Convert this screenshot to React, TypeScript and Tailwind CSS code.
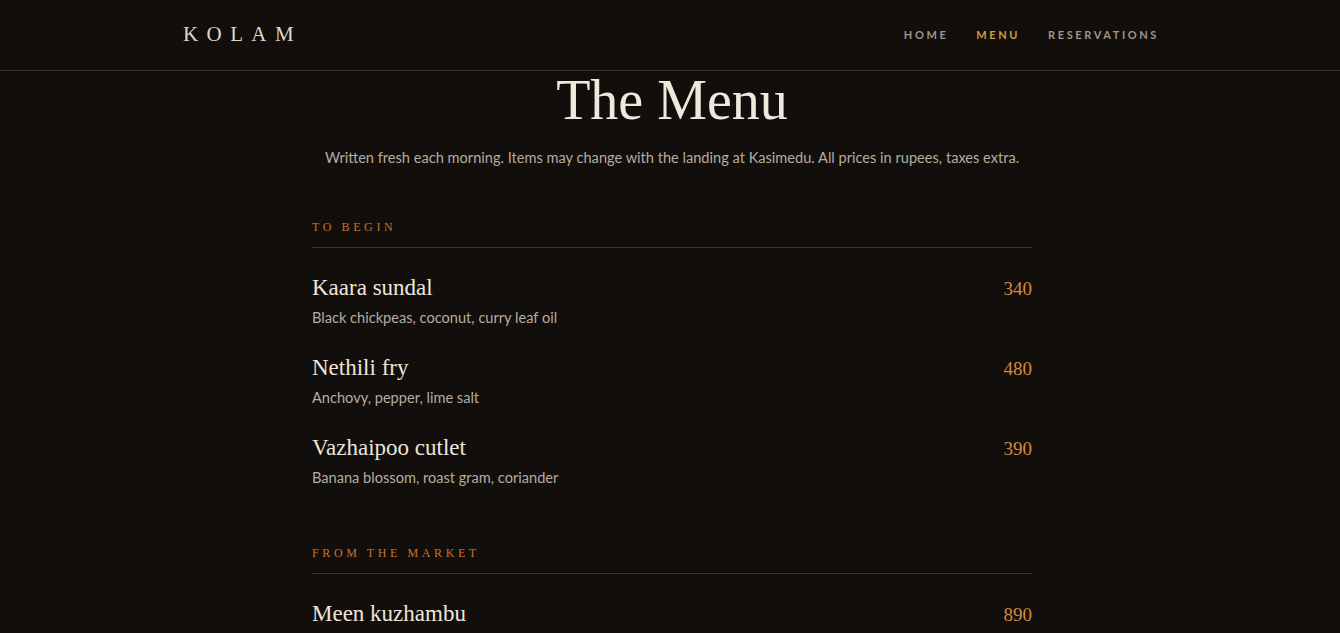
import React from "react";

const serif = { fontFamily: '"Liberation Serif", "DejaVu Serif", serif' };
const sans = { fontFamily: 'Lato, "Noto Sans", sans-serif' };

type Item = { name: string; desc?: string; price: string };

const sections: { title: string; items: Item[] }[] = [
  {
    title: "To Begin",
    items: [
      { name: "Kaara sundal", desc: "Black chickpeas, coconut, curry leaf oil", price: "340" },
      { name: "Nethili fry", desc: "Anchovy, pepper, lime salt", price: "480" },
      { name: "Vazhaipoo cutlet", desc: "Banana blossom, roast gram, coriander", price: "390" },
    ],
  },
  {
    title: "From the Market",
    items: [
      { name: "Meen kuzhambu", desc: "Seer fish, tamarind, sun-dried chilli", price: "890" },
      { name: "Eral varuval", desc: "Tiger prawns, shallots, fennel", price: "960" },
    ],
  },
];

export default function App() {
  return (
    <div className="min-h-screen bg-[#110e0c] text-[#ece6da]" style={sans}>
      <header className="h-[71px] border-b border-[#3b3128]">
        <div className="mx-auto flex h-full w-[974px] items-center justify-between">
          <div className="text-[21px] tracking-[0.4em] text-[#ddd7cd]" style={serif}>
            KOLAM
          </div>
          <nav className="-mr-[2px] flex items-center gap-[28px] text-[11px] font-bold tracking-[2.6px] text-[#9e978d]">
            <span>HOME</span>
            <span className="text-[#d59a3f]">MENU</span>
            <span>RESERVATIONS</span>
          </nav>
        </div>
      </header>
      <main className="mx-auto w-[720px] translate-x-[2px]">
        <h1 className="mt-[-1px] text-center text-[56px] leading-[60px] text-[#efe9dd]" style={serif}>
          The Menu
        </h1>
        <p className="mt-[18px] text-center text-[14.6px] leading-[20px] text-[#b6ac9e]">
          Written fresh each morning. Items may change with the landing at Kasimedu. All prices in rupees, taxes extra.
        </p>
        {sections.map((s, i) => (
          <section key={s.title} className={i === 0 ? "mt-[51px]" : "mt-[32px]"}>
            <h2
              className="text-[12px] uppercase leading-[16px] tracking-[0.3em] text-[#c8722b]"
              style={serif}
            >
              {s.title}
            </h2>
            <div className="mt-[12px] h-px bg-[#3f3222]" />
            <div className="pt-[25px]">
              {s.items.map((it) => (
                <div key={it.name} className="h-[80px]">
                  <div className="flex items-baseline justify-between">
                    <span className="text-[23px] leading-[30px] text-[#ece6da]" style={serif}>
                      {it.name}
                    </span>
                    <span className="text-[19px] leading-[30px] text-[#d8893a]" style={serif}>
                      {it.price}
                    </span>
                  </div>
                  {it.desc && (
                    <div className="mt-[5px] text-[14.6px] leading-[18px] text-[#b5ada1]">{it.desc}</div>
                  )}
                </div>
              ))}
            </div>
          </section>
        ))}
      </main>
    </div>
  );
}
